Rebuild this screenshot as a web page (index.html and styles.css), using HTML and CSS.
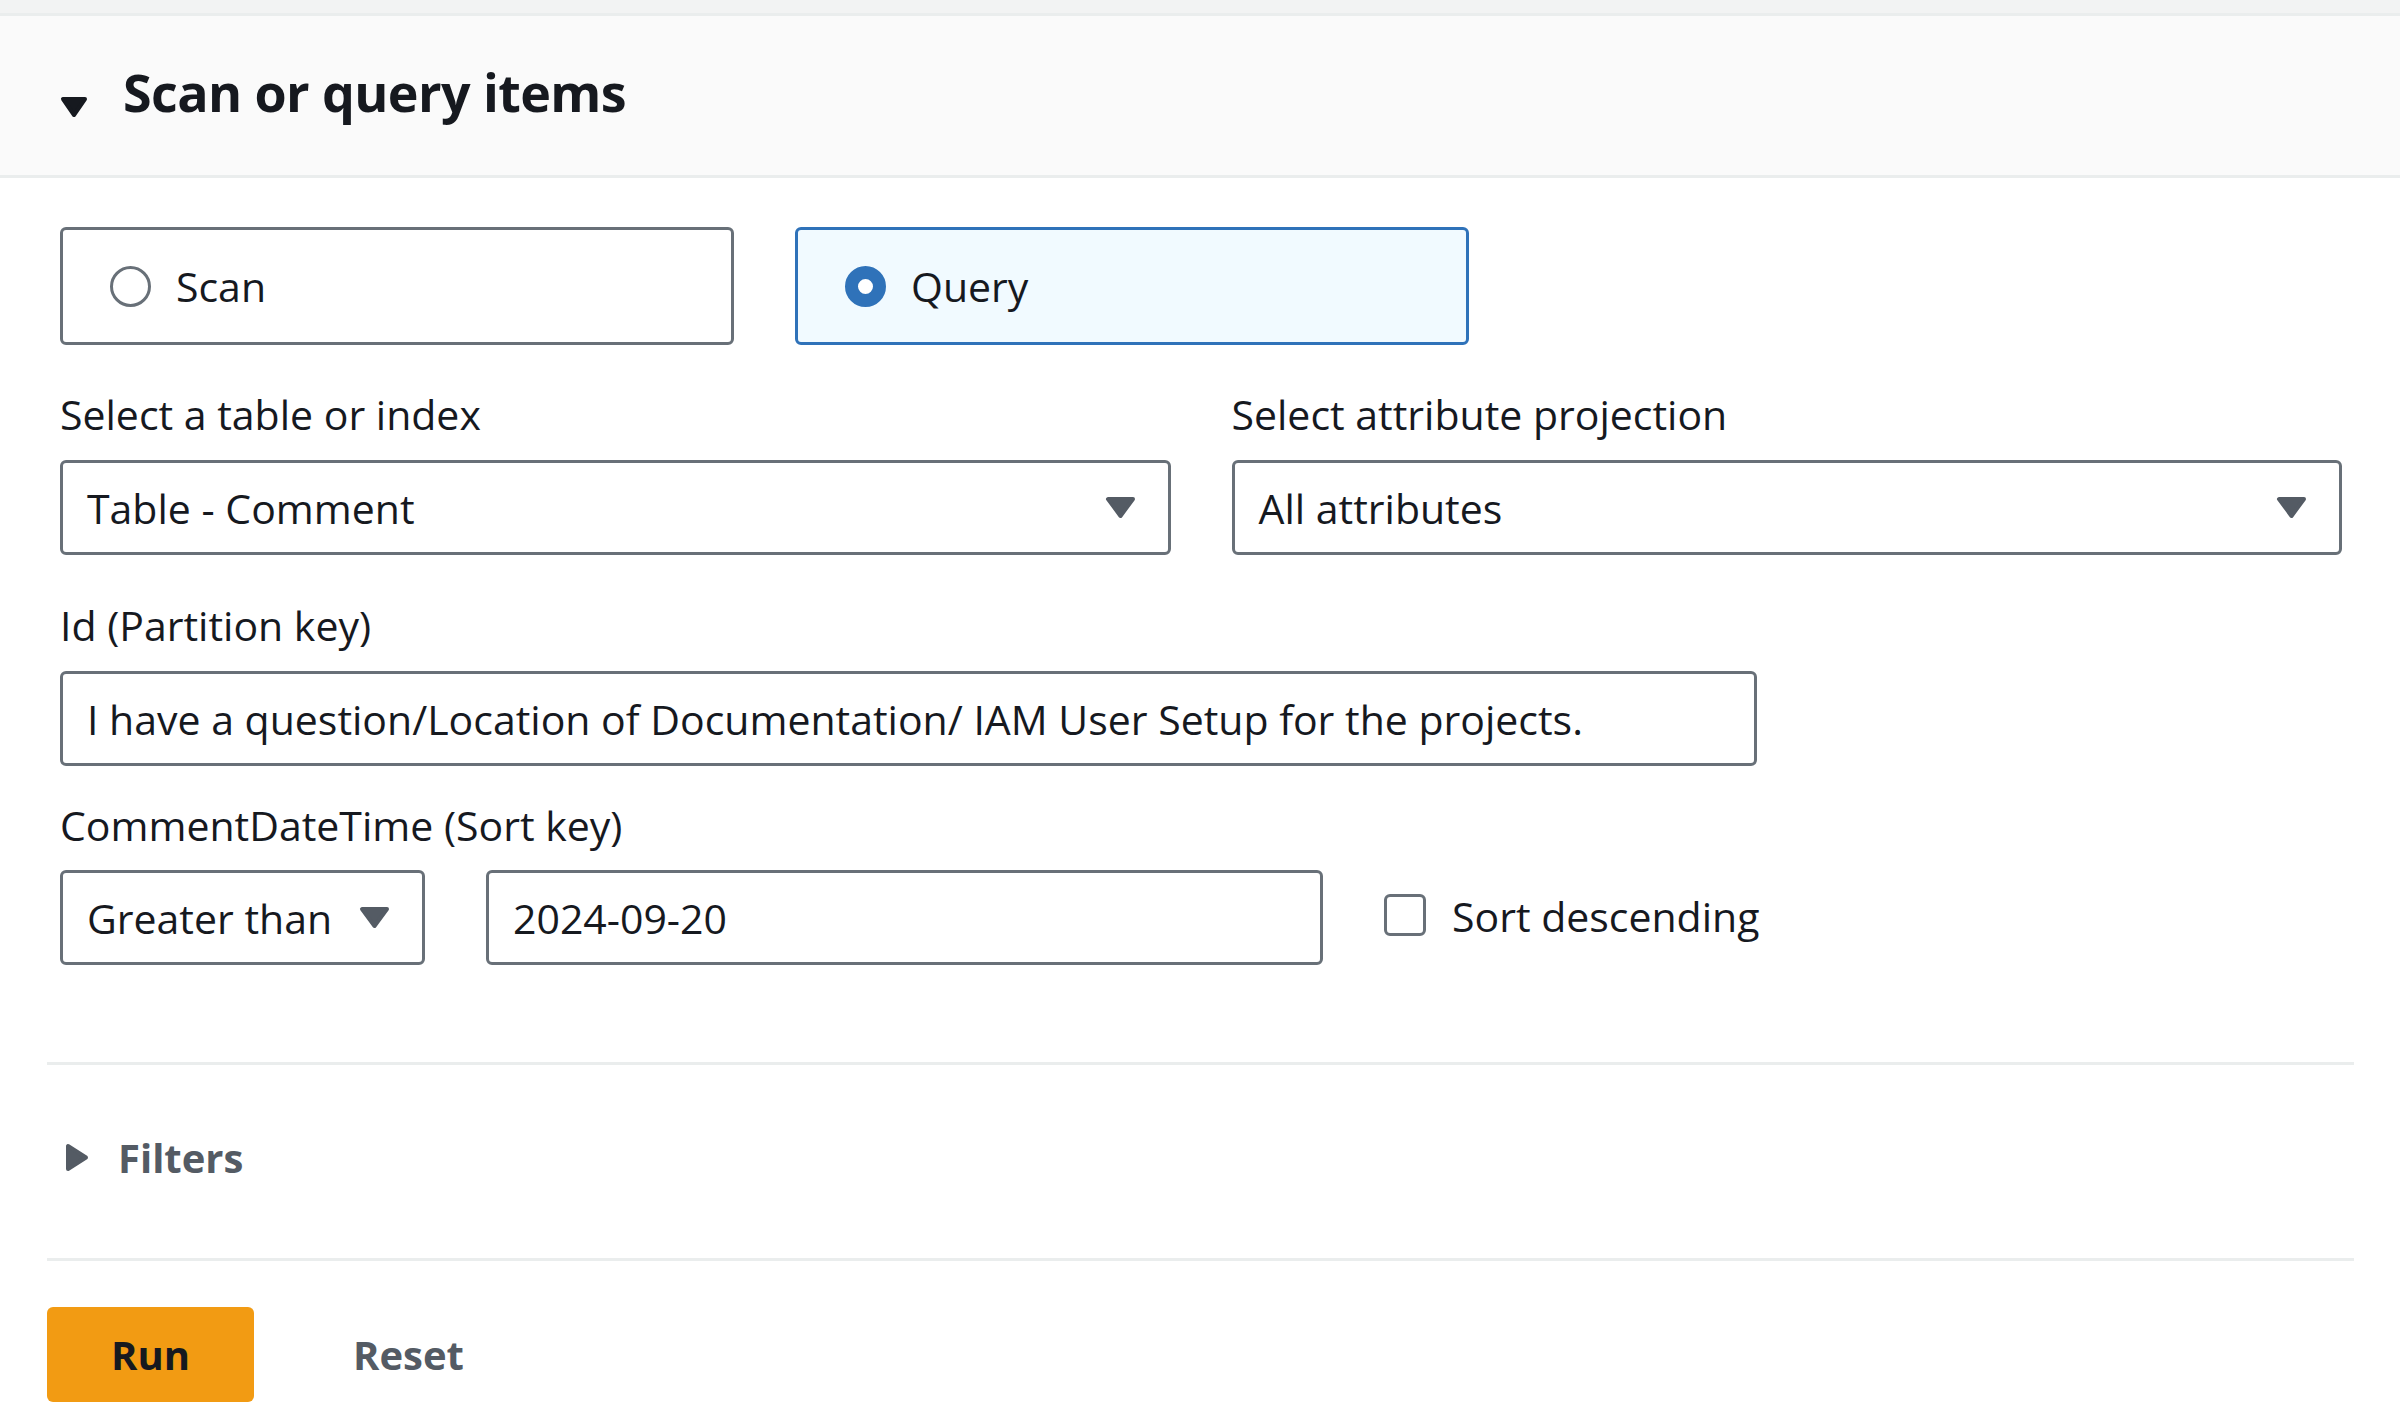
FILE: index.html
```html
<!DOCTYPE html>
<html lang="en">
<head>
<meta charset="utf-8">
<title>Scan or query items</title>
<link rel="stylesheet" href="styles.css">
</head>
<body>
<div class="top-band"></div>
<section class="panel">
  <header class="panel-header">
    <svg class="hdr-caret" viewBox="0 0 28 22" width="28" height="22"><path d="M3 3 H25 L14 19 Z" fill="#16191f" stroke="#16191f" stroke-width="4" stroke-linejoin="round"/></svg>
    <h2 class="panel-title">Scan or query items</h2>
  </header>

  <div class="panel-body">
    <div class="tiles">
      <div class="tile">
        <span class="radio"></span>
        <span class="tile-label">Scan</span>
      </div>
      <div class="tile tile-selected">
        <span class="radio radio-checked"></span>
        <span class="tile-label">Query</span>
      </div>
    </div>

    <div class="two-col">
      <div class="field">
        <div class="label">Select a table or index</div>
        <div class="select">
          <span class="value">Table - Comment</span>
          <svg class="sel-caret" viewBox="0 0 31 23" width="31" height="23"><path d="M3 3 H28 L15.5 20 Z" fill="#545b64" stroke="#545b64" stroke-width="4" stroke-linejoin="round"/></svg>
        </div>
      </div>
      <div class="field">
        <div class="label">Select attribute projection</div>
        <div class="select">
          <span class="value">All attributes</span>
          <svg class="sel-caret" viewBox="0 0 31 23" width="31" height="23"><path d="M3 3 H28 L15.5 20 Z" fill="#545b64" stroke="#545b64" stroke-width="4" stroke-linejoin="round"/></svg>
        </div>
      </div>
    </div>

    <div class="field field-id">
      <div class="label">Id (Partition key)</div>
      <div class="input input-id"><span class="value">I have a question/Location of Documentation/ IAM User Setup for the projects.</span></div>
    </div>

    <div class="field field-sort">
      <div class="label">CommentDateTime (Sort key)</div>
      <div class="sort-row">
        <div class="select select-small">
          <span class="value">Greater than</span>
          <svg class="sel-caret" viewBox="0 0 31 23" width="31" height="23"><path d="M3 3 H28 L15.5 20 Z" fill="#545b64" stroke="#545b64" stroke-width="4" stroke-linejoin="round"/></svg>
        </div>
        <div class="input input-date"><span class="value">2024-09-20</span></div>
        <label class="check">
          <span class="checkbox"></span>
          <span class="check-label">Sort descending</span>
        </label>
      </div>
    </div>
  </div>

  <div class="divider"></div>
  <div class="filters">
    <svg class="filter-caret" viewBox="0 0 24 29" width="24" height="29"><path d="M3 3 V26 L21 14.5 Z" fill="#545b64" stroke="#545b64" stroke-width="4" stroke-linejoin="round"/></svg>
    <span class="filters-label">Filters</span>
  </div>
  <div class="divider"></div>

  <div class="actions">
    <button class="btn btn-primary">Run</button>
    <button class="btn btn-link">Reset</button>
  </div>
</section>
</body>
</html>
```

FILE: styles.css
```css
html, body {
  margin: 0;
  padding: 0;
  background: #ffffff;
}

body {
  font-family: "Open Sans", "Noto Sans", sans-serif;
  color: #16191f;
  font-size: 41px;
  line-height: 66px;
}

.top-band {
  height: 13px;
  background: #f2f3f3;
}

.panel-header {
  display: flex;
  align-items: center;
  height: 159px;
  background: #fafafa;
  border-top: 3px solid #eaeded;
  border-bottom: 3px solid #eaeded;
  padding-left: 60px;
  box-sizing: content-box;
}

.hdr-caret {
  margin-top: 22px;
  flex: none;
}

.panel-title {
  margin: 0 0 8px 35px;
  font-size: 52px;
  font-weight: 700;
  letter-spacing: -0.6px;
  line-height: 66px;
}

.panel-body {
  padding: 49px 58px 0 60px;
}

.tiles {
  display: flex;
  gap: 61px;
}

.tile {
  box-sizing: border-box;
  width: 674px;
  height: 118px;
  border: 3px solid #687078;
  border-radius: 6px;
  display: flex;
  align-items: center;
  padding-left: 47px;
}

.tile-selected {
  border-color: #2f72b9;
  background: #f1faff;
}

.radio {
  box-sizing: border-box;
  width: 41px;
  height: 41px;
  border-radius: 50%;
  border: 3px solid #687078;
  background: #fff;
  flex: none;
}

.radio-checked {
  border: 13px solid #2f72b9;
}

.tile-label {
  margin-left: 25px;
}

.two-col {
  display: grid;
  grid-template-columns: 1fr 1fr;
  gap: 61px;
  margin-top: 36px;
}

.label {
  margin-bottom: 13px;
}

.select, .input {
  box-sizing: border-box;
  height: 95px;
  border: 3px solid #687078;
  border-radius: 6px;
  display: flex;
  align-items: center;
  padding: 0 32px 0 24px;
  background: #fff;
}

.select .value {
  flex: 1;
  white-space: nowrap;
}

.sel-caret {
  flex: none;
}

.field-id {
  margin-top: 37px;
}

.input-id {
  width: 1697px;
}

.field-sort {
  margin-top: 26px;
}

.field-sort .label {
  margin-bottom: 12px;
}

.sort-row {
  display: flex;
  align-items: center;
  gap: 61px;
}

.select-small {
  width: 365px;
  padding-right: 32px;
}

.input-date {
  width: 837px;
  padding-left: 24px;
}

.check {
  display: flex;
  align-items: center;
}

.checkbox {
  box-sizing: border-box;
  width: 42px;
  height: 42px;
  border: 3px solid #687078;
  border-radius: 6px;
  background: #fff;
  margin-top: -6px;
}

.check-label {
  margin-left: 26px;
  margin-top: -4px;
}

.divider {
  height: 3px;
  background: #eaeded;
  margin: 0 46px 0 47px;
}

.panel-body + .divider {
  margin-top: 97px;
}

.filters {
  box-sizing: border-box;
  height: 193px;
  display: flex;
  align-items: center;
  padding-left: 65px;
  padding-bottom: 8px;
}

.filters-label {
  margin-left: 29px;
  font-size: 40px;
  font-weight: 700;
  color: #545b64;
}

.actions {
  display: flex;
  align-items: center;
  gap: 35px;
  padding: 46px 0 0 47px;
}

.btn {
  font-family: "Open Sans", "Noto Sans", sans-serif;
  font-size: 40px;
  font-weight: 700;
  height: 95px;
  border: none;
  border-radius: 6px;
  padding: 0 64px;
  line-height: 95px;
}

.btn-primary {
  background: #f29b13;
  color: #16191f;
}

.btn-link {
  background: transparent;
  color: #545b64;
}
```
